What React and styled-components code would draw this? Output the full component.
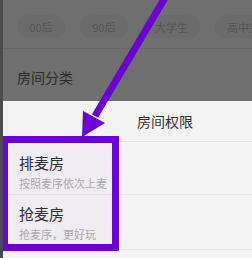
import React from "react";
import styled, { createGlobalStyle } from "styled-components";

const Global = createGlobalStyle`
  html, body { margin: 0; padding: 0; background: #6f6f6f; }
  * { box-sizing: border-box; }
  body { font-family: "Noto Sans CJK SC", "Noto Sans", sans-serif; }
`;

const Screen = styled.div`
  position: relative;
  width: 252px;
  height: 258px;
  overflow: hidden;
  background: #6f6f6f;
  border-left: 3px solid #4b4b4b;
  display: flex;
  flex-direction: column;
`;

const Backdrop = styled.div`
  height: 101px;
  flex: none;
  padding: 15px 0 0 14px;
  display: flex;
  flex-direction: column;
`;

const ChipRow = styled.div`
  display: flex;
  gap: 15px;
  height: 23px;
`;

const Chip = styled.div`
  flex: none;
  width: ${(p) => p.$w}px;
  height: 23px;
  border-radius: 12px;
  background: #6b6b6b;
  color: #545454;
  font-size: 11px;
  display: flex;
  align-items: center;
  justify-content: center;
`;

const BackDivider = styled.div`
  height: 1px;
  margin: 10px 0 0 -14px;
  background: #686868;
`;

const SectionTitle = styled.div`
  margin-top: 19px;
  font-size: 14px;
  line-height: 18px;
  color: #2a2a2a;
`;

const Sheet = styled.div`
  flex: 1;
  background: #f3f3f3;
  display: flex;
  flex-direction: column;
`;

const SheetHeader = styled.div`
  height: 41px;
  flex: none;
  display: flex;
  align-items: center;
  padding-left: 134px;
  font-size: 14px;
  color: #333;
  border-bottom: 1px solid #e4e4e4;
`;

const Option = styled.div`
  height: ${(p) => p.$h}px;
  flex: none;
  padding: ${(p) => p.$pt}px 0 0 16px;
  border-bottom: 1px solid #e6e6e6;
`;

const OptionTitle = styled.div`
  font-size: 15px;
  line-height: 18px;
  color: #2f2f2f;
`;

const OptionSub = styled.div`
  margin-top: 4px;
  font-size: 11px;
  line-height: 14px;
  color: #adadad;
  white-space: nowrap;
`;

const Highlight = styled.div`
  position: absolute;
  left: 0;
  top: 136px;
  width: 116px;
  height: 115px;
  border: 7px solid #6a00d4;
  border-left-width: 5px;
  background: rgba(150, 60, 230, 0.035);
  pointer-events: none;
`;

const Arrow = styled.svg`
  position: absolute;
  left: -3px;
  top: 0;
  pointer-events: none;
`;

const chips = [
  { label: "00后", w: 48 },
  { label: "90后", w: 48 },
  { label: "大学生", w: 57 },
  { label: "高中生", w: 57 },
];

export default function App() {
  return (
    <>
      <Global />
      <Screen>
        <Backdrop>
          <ChipRow>
            {chips.map((c) => (
              <Chip key={c.label} $w={c.w}>
                {c.label}
              </Chip>
            ))}
          </ChipRow>
          <BackDivider />
          <SectionTitle>房间分类</SectionTitle>
        </Backdrop>
        <Sheet>
          <SheetHeader>房间权限</SheetHeader>
          <Option $h={53} $pt={12}>
            <OptionTitle>排麦房</OptionTitle>
            <OptionSub>按照麦序依次上麦</OptionSub>
          </Option>
          <Option $h={55} $pt={10}>
            <OptionTitle>抢麦房</OptionTitle>
            <OptionSub>抢麦序，更好玩</OptionSub>
          </Option>
        </Sheet>
        <Highlight />
        <Arrow width="252" height="258" viewBox="0 0 252 258">
          <line
            x1="166"
            y1="-4"
            x2="95"
            y2="116"
            stroke="#6a00d4"
            strokeWidth="7"
          />
          <polygon points="82,137 83,111 105,123" fill="#6a00d4" />
        </Arrow>
      </Screen>
    </>
  );
}
